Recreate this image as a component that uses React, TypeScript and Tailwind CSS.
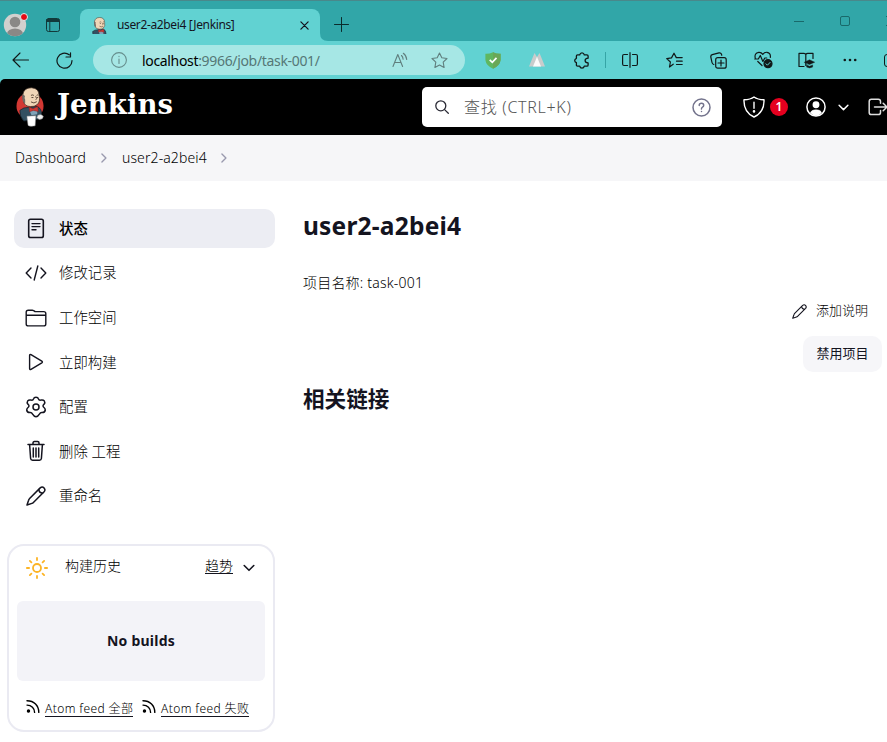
import React from "react";

type IconProps = { className: string; box?: string; w?: number; children: React.ReactNode };

function Icon({ className, box = "0 0 24 24", w = 1.5, children }: IconProps) {
  return (
    <svg
      viewBox={box}
      className={"block shrink-0 " + className}
      fill="none"
      stroke="currentColor"
      strokeWidth={w}
      strokeLinecap="round"
      strokeLinejoin="round"
    >
      {children}
    </svg>
  );
}

function Pencil({ className }: { className: string }) {
  return (
    <Icon className={className} box="0 0 20 20" w={1.5}>
      <path d="M1 19 L2.6 14.2 Q2.9 13.2 3.6 12.5 L14.2 1.9 Q16.2 .2 18 1.9 Q19.8 3.8 18.1 5.8 L7.4 16.5 Q6.8 17.1 5.9 17.4 Z" />
      <path d="M12.8 3.4 Q13 6.8 16.6 7.2" />
    </Icon>
  );
}

function Feed() {
  return (
    <Icon className="h-[14px] w-[14px]" box="0 0 14 14" w={1.4}>
      <path d="M1 .8 C8 .8 12.8 5.6 12.8 12.4 M1 5.1 C5.5 5.1 8.6 8.1 8.6 12.4" />
      <circle cx="2.5" cy="11" r="1" fill="currentColor" />
    </Icon>
  );
}

function Chevron({ className }: { className: string }) {
  return (
    <Icon className={className} box="0 0 12 12" w={1.6}>
      <path d="M1.2 3.5 L6 8.3 L10.8 3.5" />
    </Icon>
  );
}

function Butler({ className, tight }: { className: string; tight?: boolean }) {
  return (
    <svg viewBox={tight ? "3 0 25 28" : "0 0 30 41"} className={"block shrink-0 " + className}>
      {!tight && <ellipse cx="14.5" cy="19.5" rx="14" ry="14" fill="#d33833" />}
      <path d="M4 24 Q8 20.5 13 21 L22 20 Q26.5 22 26.5 28 L25 33 L8 35 Q3.5 30 4 24Z" fill="#335061" stroke="#16232c" strokeWidth=".8" />
      <path d="M7 8 Q8 .6 16 .6 Q24 1 24 9 Q25.3 15 22 18 Q19 20.5 15 20 Q9 20 8 15 Z" fill="#f0d6b7" stroke="#3d2e25" strokeWidth=".8" />
      <path d="M7 7 Q5.7 10 7 14 Q8 16.5 9.5 16.5 L9.5 13 Q8.4 11 9.3 9Z" fill="#6f6b66" />
      <path d="M15.5 8.5 Q17 7.5 18.5 8.5 M21.3 8.5 Q22.3 7.6 23 8.4 M20.3 9.5 Q22.3 12.3 20.5 13 M16 10.7 h2 M21.7 10.7 h1.2 M15.5 15.2 Q18.5 17.5 21.5 15" stroke="#493728" strokeWidth=".9" fill="none" />
      <path d="M14 24 L18 23 L22 24 L22 28 L16 29Z" fill="#7fa3b8" />
      <path d="M13.5 20.5 L17.5 22.3 L22.5 20 L23 25.2 L18 24 L14 25.4Z" fill="#d33833" stroke="#81201e" strokeWidth=".5" />
      {!tight && (
        <>
          <path d="M11.3 30 L20.5 29.6 L19.8 40 Q15.5 41.2 12.5 39.6Z" fill="#fff" stroke="#999" strokeWidth=".5" />
          <path d="M22.5 29 Q26 27 28.3 30 Q28 33.6 24 33.4 L21.5 31.6Z" fill="#eee" stroke="#777" strokeWidth=".5" />
        </>
      )}
    </svg>
  );
}

function TabStrip() {
  return (
    <div className="flex h-[41px] items-start overflow-hidden border-t border-[#49888b] bg-[#31a6a8]">
      <div className="relative ml-[3px] mt-[12px] h-6 w-6 shrink-0">
        <svg viewBox="0 0 24 24" className="block h-6 w-6">
          <clipPath id="face"><circle cx="12" cy="12" r="11.2" /></clipPath>
          <g clipPath="url(#face)">
            <rect width="24" height="24" fill="#d2d0ce" />
            <circle cx="12" cy="9" r="5.3" fill="#8a8886" />
            <ellipse cx="12" cy="21" rx="8" ry="5.5" fill="#8a8886" />
          </g>
        </svg>
        <span className="absolute left-[17px] top-0 h-[8px] w-[8px] rounded-full border border-[#d8f0f0] bg-[#e50914]" />
      </div>
      <Icon className="ml-[19px] mt-[17px] h-[14px] w-[14px] text-[#12393a]" box="0 0 14 14" w={1}>
        <rect x=".5" y=".5" width="13" height="13" rx="2" />
        <path d="M1 1.5h12v2H1z" fill="currentColor" />
        <path d="M3.8 4v9" />
      </Icon>
      <div className="ml-[12px] flex w-2 shrink-0 items-end self-stretch">
        <svg viewBox="0 0 8 8" className="block h-2 w-2"><path d="M8 0 Q8 8 0 8 H8Z" fill="#61d2d2" /></svg>
      </div>
      <div className="mt-[8px] flex h-8 w-[240px] shrink-0 items-center rounded-t-[8px] bg-[#61d2d2]">
        <Butler tight className="ml-[12px] h-[17px] w-[15px]" />
        <span className="ml-[10px] w-[170px] whitespace-nowrap text-[12px] tracking-[-0.37px]">user2-a2bei4 [Jenkins]</span>
        <Icon className="ml-[13px] h-[9px] w-[9px]" box="0 0 10 10" w={1.4}><path d="M1 1l8 8M9 1L1 9" /></Icon>
      </div>
      <div className="flex w-2 shrink-0 items-end self-stretch">
        <svg viewBox="0 0 8 8" className="block h-2 w-2"><path d="M0 0 Q0 8 8 8 H0Z" fill="#61d2d2" /></svg>
      </div>
      <Icon className="ml-[6px] mt-[16px] h-[15px] w-[15px] text-[#0b2b2b]" box="0 0 15 15" w={1}><path d="M.5 7.5h14M7.5 .5v14" /></Icon>
      <div className="ml-[444px] flex shrink-0 items-center pt-[15px] text-[#19696a]">
        <span className="ml-px h-px w-[10px] bg-current" />
        <span className="ml-[36px] h-[10px] w-[10px] rounded-[2px] border border-current" />
        <Icon className="ml-[36px] h-[10px] w-[10px]" box="0 0 10 10" w={1}><path d="M0 0l10 10M10 0L0 10" /></Icon>
      </div>
    </div>
  );
}

function Toolbar() {
  return (
    <div className="flex h-[38px] items-center overflow-hidden bg-[#61d2d2] text-[#101818]">
      <Icon className="ml-[12px] h-[16px] w-[17px]" box="0 0 17 16" w={1.1}><path d="M1 8h15.5M8 1L1 8l7 7" /></Icon>
      <Icon className="ml-[27px] h-[17px] w-[17px]" box="0 0 17 17" w={1.2}><path d="M13.2 2.8 A7.5 7.5 0 1 0 16 8.5 M14.5 .8v4.2h-4.5" /></Icon>
      <div className="ml-[20px] flex h-[30px] w-[372px] shrink-0 items-center rounded-full bg-[#a6e7e5]">
        <Icon className="ml-[18px] h-4 w-4 text-[#668e8d]" box="0 0 16 16" w={1.1}>
          <circle cx="8" cy="8" r="7.4" /><path d="M8 7v4.5M8 4.4v.2" />
        </Icon>
        <span className="ml-[15px] w-[230px] whitespace-nowrap text-[14px] tracking-[-0.33px] text-[#557776]"><span className="text-black">localhost</span>:9966/job/task-001/</span>
        <Icon className="ml-[20px] h-4 w-4 text-[#607f7e]" box="0 0 16 16" w={1.1}>
          <path d="M1 14.5L5.8 2.5l4.8 12M2.6 10.5h6.4M9.5 3.5q1.5 1.5 1.6 3.7M11.3 1.3q3.2 2.4 3.4 6.2" />
        </Icon>
        <Icon className="ml-[23px] h-[17px] w-[17px] text-[#607f7e]" box="0 0 17 17" w={1.1}>
          <path d="M8.5 1l2.3 4.8 5.2.7-3.8 3.7.9 5.3-4.6-2.5-4.6 2.5.9-5.3L1 6.5l5.2-.7z" />
        </Icon>
      </div>
      <svg viewBox="0 0 16 17" className="ml-[20px] block h-[17px] w-4 shrink-0">
        <path d="M8 .3Q11.5 2 15.6 1.8V8Q15 13.5 8 16.7Q1 13.5.4 8V1.8Q4.5 2 8 .3Z" fill="#5fb760" />
        <path d="M8 .3Q11.5 2 15.6 1.8V8Q15 13.5 8 16.7Z" fill="#6aa757" />
        <path d="M4.7 7.8l2.6 2.5 4.2-4.5" stroke="#fff" strokeWidth="1.7" fill="none" />
      </svg>
      <svg viewBox="0 0 16 14" className="ml-[28px] block h-[14px] w-4 shrink-0">
        <path d="M0 13.5L5.5 0 8 4 10.5 0 16 13.5Z" fill="#c9cccc" />
        <path d="M4 13.5L8 3.8l4 9.7Z" fill="#fafafa" />
      </svg>
      <Icon className="ml-[29px] h-[17px] w-[17px]" box="0 0 17 17" w={1.3}>
        <path d="M3.6 2.8h2.1q.4-2 2.3-2t2.3 2h2.6q1.2 0 1.2 1.2v2.2q-3 .2-3 2.4t3 2.4V13q0 1.2-1.2 1.2h-2.6q-.4 2-2.3 2t-2.3-2H3.6q-1.2 0-1.2-1.2v-2.3Q.7 10 .7 8.5t1.7-2.2V4q0-1.2 1.2-1.2z" />
      </Icon>
      <span className="ml-[14px] h-4 w-px shrink-0 bg-[#36a5a6]" />
      <Icon className="ml-[16px] h-4 w-4" box="0 0 16 16" w={1.2}>
        <path d="M5.5 2.5H2Q.6 2.5.6 4v8q0 1.5 1.4 1.5h3.5M10.5 2.5H14q1.4 0 1.4 1.5v8q0 1.5-1.4 1.5h-3.5M8 .7v14.6" />
      </Icon>
      <Icon className="ml-[28px] h-[17px] w-[17px]" box="0 0 17 17" w={1.2}>
        <path d="M7.2 12.2L3.5 15l.9-5L.7 6.6l4.8-.7L8 1.2l2.3 4.4h5.9M10.5 9.2h5.7M10.5 12.5h5.7" />
      </Icon>
      <Icon className="ml-[27px] h-[17px] w-[17px]" box="0 0 17 17" w={1.2}>
        <rect x="5.7" y="5.7" width="10.5" height="10.5" rx="2" />
        <path d="M11 8v6M8 11h6M3.8 12.5Q2.3 12 2 10.5L.8 5Q.5 3.2 2.3 2.7L9 .9q1.7-.4 2.4 1.2l.4 1.2" />
      </Icon>
      <Icon className="ml-[27px] h-[18px] w-[19px]" box="0 0 19 18" w={1.2}>
        <path d="M8 14.5L3.8 10.5M1.3 7.5Q0 2 4.8 1.3 7.3 1.1 8.8 3.3 10.5 1 13 1.3 17 2 16.3 6.5M.8 8h3.5l2-3.5 2.6 6L10.8 7h2" />
        <circle cx="14" cy="12.7" r="4" fill="currentColor" />
        <path d="M12 12.8l1.4 1.4 2.7-2.8" stroke="#61d2d2" strokeWidth="1" />
      </Icon>
      <Icon className="ml-[25px] h-[17px] w-[17px]" box="0 0 17 17" w={1.2}>
        <path d="M7.8 2.5v11M7.8 2.5Q7.3 1.3 6 1.3H1v13.2h5M7.8 2.5Q8.5 1.3 9.8 1.3H15v5.2" />
        <path d="M6.3 10.2l5.2-2.4 5.2 2.4-5.2 2.3zM8.6 12.9v2.2q3 1.6 6 0v-2.2l-3 1.3z" fill="currentColor" strokeWidth=".4" />
      </Icon>
      <svg viewBox="0 0 14 4" className="ml-[28px] block h-1 w-[14px] shrink-0" fill="currentColor"><circle cx="1.8" cy="2" r="1.3" /><circle cx="7" cy="2" r="1.3" /><circle cx="12.2" cy="2" r="1.3" /></svg>
      <span className="ml-[27px] h-[13px] w-4 shrink-0 rounded-[3px] border border-[#101818]" />
    </div>
  );
}

function Header() {
  return (
    <header className="bg-[#61d2d2]">
      <div className="flex h-[56px] items-center overflow-hidden rounded-tl-[5px] bg-black text-white">
        <Butler className="ml-[16px] h-[40px] w-[29px]" />
        <span className="ml-[12px] w-[130px] shrink-0 pb-[4px] font-['DejaVu_Serif'] text-[27.5px] font-bold leading-none tracking-[0.1px]">Jenkins</span>
        <div className="ml-[235px] flex h-10 w-[300px] shrink-0 items-center rounded-[5px] bg-white">
          <Icon className="ml-[13px] h-[14px] w-[14px] text-[#2a2a35]" box="0 0 14 14" w={1.3}><circle cx="5.8" cy="5.8" r="5" /><path d="M9.6 9.6l3.7 3.7" /></Icon>
          <span className="ml-[15px] w-[210px] whitespace-nowrap text-[16px] font-light tracking-[0.7px] text-[#555]">查找 (CTRL+K)</span>
          <Icon className="ml-[18px] h-[19px] w-[19px] text-[#73738c]" box="0 0 19 19" w={1.5}>
            <circle cx="9.5" cy="9.5" r="8.5" /><path d="M7.2 7.4Q7.3 5.3 9.5 5.3t2.2 2q0 1.2-1.2 1.9T9.5 11M9.5 13.5v.1" />
          </Icon>
        </div>
        <Icon className="ml-[21px] h-[22px] w-[22px]" box="0 0 22 22" w={1.4}>
          <path d="M11 1Q14.5 3.6 21 3.8Q21.5 16 11 21Q.5 16 1 3.8Q7.5 3.6 11 1ZM11 6.3v6" /><circle cx="11" cy="15.4" r=".6" fill="currentColor" />
        </Icon>
        <span className="ml-[5px] flex h-[18px] w-[18px] shrink-0 items-center justify-center rounded-full bg-[#e6001f] text-[12px] font-semibold leading-none">1</span>
        <Icon className="ml-[18px] h-[20px] w-[20px]" box="0 0 20 20" w={1.5}>
          <circle cx="10" cy="10" r="9.1" /><circle cx="10" cy="7.7" r="2.7" fill="currentColor" /><path d="M4.5 16Q5 12.8 10 12.8t5.5 3.2Q13 18.7 10 18.7T4.5 16Z" fill="currentColor" strokeWidth=".5" />
        </Icon>
        <Chevron className="ml-[12px] h-[11px] w-[11px]" />
        <Icon className="ml-[19px] h-[18px] w-[22px] text-[#dedede]" box="0 0 22 18" w={1.5}>
          <path d="M12.5 5.2V3.5Q12.5 1.3 10.3 1.3H3.4Q1.2 1.3 1.2 3.5v10.9q0 2.2 2.2 2.2h6.9q2.2 0 2.2-2.2v-1.8M6.5 9h12.3M15.2 5.2L19 9l-3.8 3.8" />
        </Icon>
      </div>
    </header>
  );
}

function Breadcrumbs() {
  return (
    <nav className="flex h-[46px] items-center bg-[#f6f6f8] text-[14px] font-light text-black">
      <span className="ml-[15px] w-[72px] whitespace-nowrap pb-[2px] tracking-[0.1px]">Dashboard</span>
      <Chevron className="ml-[11px] h-[10px] w-[12px] -rotate-90 text-[#9a9aae]" />
      <span className="ml-[12px] w-[86px] whitespace-nowrap pb-[2px] tracking-[0.1px]">user2-a2bei4</span>
      <Chevron className="ml-[10px] h-[10px] w-[12px] -rotate-90 text-[#9a9aae]" />
    </nav>
  );
}

const tasks: { label: string; icon: React.ReactNode }[] = [
  {
    label: "状态",
    icon: <Icon className="h-[22px] w-[22px]" box="0 0 22 22" w={1.6}><rect x="3.7" y="1.2" width="14.6" height="18.3" rx="1.8" /><path d="M7 5.6h8M7 8.6h8M7 11.8h4" strokeWidth="1.4" /></Icon>,
  },
  {
    label: "修改记录",
    icon: <Icon className="h-[22px] w-[22px]" box="0 0 22 22" w={1.4}><path d="M6 6L1.2 11 6 16M16 6l4.8 5-4.8 5M12.8 4L9.2 18" /></Icon>,
  },
  {
    label: "工作空间",
    icon: <Icon className="h-[22px] w-[22px]" box="0 0 22 22" w={1.4}><path d="M1.2 8.5V5.2Q1.2 3.2 3.2 3.2h4.1q.8 0 1.4.5l.6.4q.6.5 1.4.5h8q2.1 0 2.1 2v10.3q0 2-2.1 2H3.4q-2.2 0-2.2-2zM1.2 8.3h19.6" /></Icon>,
  },
  {
    label: "立即构建",
    icon: <Icon className="h-[22px] w-[22px]" box="0 0 22 22" w={1.4}><path d="M4.6 4.6v12.8q0 1.5 1.4.9L16.8 11.9q1.2-.9 0-1.8L6 3.7Q4.6 3.1 4.6 4.6Z" /></Icon>,
  },
  {
    label: "配置",
    icon: <Icon className="h-[22px] w-[22px]" box="0 0 22 22" w={1.5}><circle cx="11" cy="11" r="3" /><path d="M8.6 2.8Q9 1.3 11 1.3t2.4 1.5q.6 1.7 2.4 1.3 2.4-.6 3.5.8 1.1 1.7-.2 3.3-1.8 1.4-.6 2.8 1.8 1.4 1.8 3 -.5 2.6-3.1 2.6-1.9-.2-2.6 1.3Q13 20.7 11 20.7T7.4 17.9Q6.7 16.4 4.8 16.6q-2.6 0-3.1-2.6 0-1.6 1.8-3 1.2-1.4-.6-2.8-1.3-1.6-.2-3.3 1.1-1.4 3.5-.8 1.8.4 2.4-1.3Z" /></Icon>,
  },
  {
    label: "删除 工程",
    icon: <Icon className="h-[22px] w-[22px]" box="0 0 22 22" w={1.5}><path d="M3 4.5h16M4.6 4.5l1 14q.2 1.8 2 1.8h6.8q1.8 0 2-1.8l1-14M8 4.3V3q0-1.4 1.4-1.4h3.2Q14 1.6 14 3v1.3M8.3 8v9M11 8v9M13.7 8v9" /></Icon>,
  },
  { label: "重命名", icon: <span className="flex h-[22px] w-[22px] items-center justify-center"><Pencil className="h-[20px] w-[20px]" /></span> },
];

const rays = [0, 45, 90, 135, 180, 225, 270, 315];

function SidePanel() {
  return (
    <aside className="flex w-[275px] shrink-0 flex-col pl-[7px] pt-[28px]">
      <ul className="ml-[7px] flex flex-col gap-[5.6px]">
        {tasks.map((t, i) => (
          <li
            key={t.label}
            className={
              "flex h-[39px] items-center rounded-[10px] pl-[11px] " +
              (i === 0 ? "bg-[#ecedf3] font-medium" : "font-light")
            }
          >
            {t.icon}
            <span className="ml-[12px] whitespace-nowrap pt-px text-[14.4px] leading-none text-black">{t.label}</span>
          </li>
        ))}
      </ul>
      <section className="mt-[28px] flex h-[188px] flex-col rounded-[17px] border-2 border-[#eaeaf2] font-light">
        <div className="flex h-[43px] items-center pl-[17px]">
          <Icon className="mt-[1px] h-[22px] w-[22px] text-[#fcb426]" box="0 0 22 22" w={1.8}>
            <circle cx="11" cy="11" r="4" />
            {rays.map((a) => <path key={a} d="M11 .9v2.2" transform={`rotate(${a} 11 11)`} />)}
          </Icon>
          <span className="ml-[17px] w-[140px] pb-[2px] text-[14px] leading-none text-black">构建历史</span>
          <span className="mb-[2px] border-b border-[#14141f] text-[14px] leading-[15px] text-black">趋势</span>
          <Chevron className="ml-[10px] mt-[2px] h-[12px] w-[12px]" />
        </div>
        <div className="mx-[8px] mt-[12px] flex h-[80px] items-center justify-center rounded-[6px] bg-[#f3f3f8] text-[14px] font-bold tracking-[0.25px]">
          No builds
        </div>
        <div className="mt-[19px] flex items-start pl-[17px] text-[12px] tracking-[0.4px] text-black">
          <Feed />
          <span className="ml-[5px] w-[88px] whitespace-nowrap border-b border-[#14141f] pt-px leading-[15px]">Atom feed 全部</span>
          <span className="w-[9px]" />
          <Feed />
          <span className="ml-[5px] w-[88px] whitespace-nowrap border-b border-[#14141f] pt-px leading-[15px]">Atom feed 失败</span>
        </div>
      </section>
    </aside>
  );
}

function MainPanel() {
  return (
    <main className="ml-[28px] flex flex-1 flex-col font-light">
      <h1 className="mt-[26px] h-[37px] text-[24.5px] font-bold leading-[37px] tracking-[0.2px]">user2-a2bei4</h1>
      <p className="mt-[28px] h-[22px] text-[14px] leading-[22px] tracking-[0.2px] text-black">项目名称: task-001</p>
      <div className="mt-[6px] flex h-[22px] items-center justify-end pr-[19px]">
        <Pencil className="mt-px h-[15px] w-[15px]" />
        <span className="ml-[9px] pb-px text-[13px] leading-none text-black">添加说明</span>
      </div>
      <div className="mt-[14px] flex justify-end pr-[5px]">
        <button className="flex h-[36px] w-[79px] items-center justify-center rounded-[10px] bg-[#f6f6f9] text-[13px] font-normal">禁用项目</button>
      </div>
      <h2 className="mt-[9px] text-[21.6px] font-bold leading-[36px]">相关链接</h2>
    </main>
  );
}

export default function App() {
  return (
    <div className="flex h-[742px] w-[887px] flex-col overflow-hidden bg-white font-['Noto_Sans','Noto_Sans_CJK_SC',sans-serif] text-[#14141f]">
      <TabStrip />
      <Toolbar />
      <Header />
      <Breadcrumbs />
      <div className="flex flex-1">
        <SidePanel />
        <MainPanel />
      </div>
    </div>
  );
}
